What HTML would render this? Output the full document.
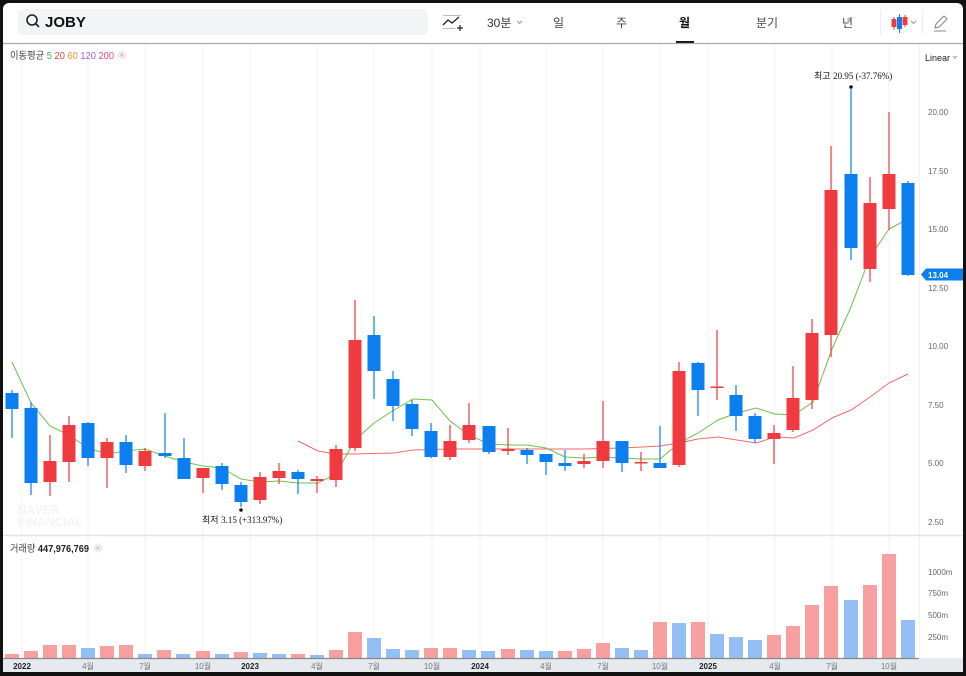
<!DOCTYPE html>
<html><head><meta charset="utf-8"><style>
*{margin:0;padding:0;box-sizing:border-box}
html,body{width:966px;height:676px;background:#111;overflow:hidden;font-family:"Liberation Sans","Noto Sans CJK KR",sans-serif}
#f{position:absolute;left:3px;top:3px;width:960px;height:669px;background:#fff;border-radius:6px;overflow:hidden}
</style></head><body>
<div id="f"></div>
<svg width="966" height="676" style="position:absolute;left:0;top:0" xmlns="http://www.w3.org/2000/svg" font-family="Liberation Sans, Noto Sans CJK KR, sans-serif">
<rect x="18" y="9" width="410" height="26" rx="5" fill="#f3f4f6"/>
<circle cx="32" cy="20" r="5" fill="none" stroke="#222" stroke-width="1.6"/>
<line x1="35.5" y1="23.5" x2="39" y2="27" stroke="#222" stroke-width="1.6"/>
<text x="45" y="27" font-size="15" font-weight="bold" fill="#111">JOBY</text>
<line x1="443" y1="15.5" x2="461" y2="15.5" stroke="#bbb"/>
<line x1="443" y1="28.5" x2="455" y2="28.5" stroke="#bbb"/>
<polyline points="443,25 448,20 452,23 459,17" fill="none" stroke="#222" stroke-width="1.3"/>
<path d="M457 28h6M460 25v6" stroke="#222" stroke-width="1.2"/>
<text x="487" y="27" font-size="12" fill="#333">30분</text>
<path d="M517 21l2.5 2.5 2.5-2.5" fill="none" stroke="#999"/>
<text x="553" y="27" font-size="12" fill="#444">일</text>
<text x="616" y="27" font-size="12" fill="#444">주</text>
<text x="679" y="27" font-size="12" font-weight="bold" fill="#111">월</text>
<rect x="676" y="41" width="18" height="3" fill="#111"/>
<text x="756" y="27" font-size="12" fill="#444">분기</text>
<text x="842" y="27" font-size="12" fill="#444">년</text>
<line x1="880.5" y1="10" x2="880.5" y2="35" stroke="#eee"/>
<line x1="894" y1="17" x2="894" y2="30" stroke="#ef3a3f" stroke-width="1"/><rect x="891.5" y="19" width="5" height="8" fill="#ef3a3f"/>
<line x1="899.5" y1="14" x2="899.5" y2="33" stroke="#0b7ef0"/><rect x="897" y="17" width="5" height="12" fill="#0b7ef0"/>
<line x1="905" y1="15" x2="905" y2="27" stroke="#ef3a3f"/><rect x="902.5" y="17" width="5" height="8" fill="#ef3a3f"/>
<path d="M911 21l2.5 2.5 2.5-2.5" fill="none" stroke="#999"/>
<line x1="922.5" y1="10" x2="922.5" y2="35" stroke="#eee"/>
<path d="M935 28l1-4 8-8 3 3-8 8zM934 31h12" fill="none" stroke="#888" stroke-width="1.1"/>
<line x1="3" y1="43.5" x2="963" y2="43.5" stroke="#aaa" stroke-width="1.2"/>
<g stroke="#f1f2f4">
<line x1="22" y1="44" x2="22" y2="658"/><line x1="88" y1="44" x2="88" y2="658"/><line x1="145" y1="44" x2="145" y2="658"/><line x1="203" y1="44" x2="203" y2="658"/><line x1="250" y1="44" x2="250" y2="658"/><line x1="317" y1="44" x2="317" y2="658"/><line x1="374" y1="44" x2="374" y2="658"/><line x1="432" y1="44" x2="432" y2="658"/><line x1="480" y1="44" x2="480" y2="658"/><line x1="546" y1="44" x2="546" y2="658"/><line x1="603" y1="44" x2="603" y2="658"/><line x1="660" y1="44" x2="660" y2="658"/><line x1="708" y1="44" x2="708" y2="658"/><line x1="775" y1="44" x2="775" y2="658"/><line x1="832" y1="44" x2="832" y2="658"/><line x1="889" y1="44" x2="889" y2="658"/>
<line x1="919.5" y1="44" x2="919.5" y2="658"/>
</g>
<line x1="3" y1="535.5" x2="963" y2="535.5" stroke="#e2e5ea" stroke-width="1.5"/>
<text x="10" y="59" font-size="10" fill="#444" textLength="104" lengthAdjust="spacingAndGlyphs">이동평균 <tspan fill="#4caf50">5</tspan> <tspan fill="#f04050">20</tspan> <tspan fill="#f5922f">60</tspan> <tspan fill="#a066d8">120</tspan> <tspan fill="#e8487c">200</tspan></text>
<circle cx="122" cy="55" r="4.5" fill="#eee"/><text x="119.8" y="57.5" font-size="7" fill="#aaa">×</text>
<text x="925" y="61" font-size="9" fill="#222">Linear</text><path d="M953 56l2 2 2-2" fill="none" stroke="#999"/>
<text x="18" y="514" font-size="12" font-weight="bold" fill="#f3f4f6">NAVER</text>
<text x="18" y="526" font-size="12" font-weight="bold" fill="#f3f4f6">FINANCIAL</text>
<g font-size="8" fill="#666">
<text x="928" y="115">20.00</text><text x="928" y="174">17.50</text><text x="928" y="232">15.00</text><text x="928" y="291">12.50</text><text x="928" y="349">10.00</text><text x="928" y="408">7.50</text><text x="928" y="466">5.00</text><text x="928" y="525">2.50</text>
<text x="928" y="575">1000m</text><text x="928" y="596">750m</text><text x="928" y="618">500m</text><text x="928" y="640">250m</text>
</g>
<path d="M921 274.5l5-6h37v12h-37z" fill="#0b7ef0"/><text x="928" y="278" font-size="8" font-weight="bold" fill="#fff">13.04</text>
<polyline fill="none" stroke="#f06a6a" stroke-width="1" points="298,441 318,451 336,454 355,454 394,453 413,450 450,449 489,449 527,449 584,449 622,448 660,446 679,443 698,439 718,437 737,440 756,443 775,437 794,438 813,430 832,418 851,410 870,397 889,383 908,374"/>
<polyline fill="none" stroke="#6cc24a" stroke-width="1" points="12,362 31,403 50,426 69,435 88,448 107,454 126,451 145,449 165,456 184,462 203,466 222,468 241,479 260,482 279,481 298,483 318,483 336,474 355,440 374,423 394,410 413,399 432,400 450,421 469,435 489,444 508,445 527,445 546,448 565,457 584,458 603,457 622,458 641,459 660,459 679,443 698,433 718,420 737,413 756,408 775,414 794,415 813,402 832,349 851,307 870,257 889,229 908,219"/>
<g stroke-width="1.2">
<g fill="#0b7ef0" stroke="#0b7ef0">
<line x1="12" y1="390" x2="12" y2="438"/><rect x="5.5" y="393" width="13" height="16" stroke="none"/>
<line x1="31" y1="402" x2="31" y2="495"/><rect x="24.5" y="408" width="13" height="75" stroke="none"/>
<line x1="88" y1="422" x2="88" y2="466"/><rect x="81.5" y="423" width="13" height="35" stroke="none"/>
<line x1="126" y1="435" x2="126" y2="473"/><rect x="119.5" y="442" width="13" height="23" stroke="none"/>
<line x1="165" y1="413" x2="165" y2="458"/><rect x="158.5" y="453" width="13" height="3" stroke="none"/>
<line x1="184" y1="438" x2="184" y2="479"/><rect x="177.5" y="458" width="13" height="21" stroke="none"/>
<line x1="222" y1="463" x2="222" y2="490"/><rect x="215.5" y="466" width="13" height="18" stroke="none"/>
<line x1="241" y1="482" x2="241" y2="507"/><rect x="234.5" y="485" width="13" height="17" stroke="none"/>
<line x1="298" y1="470" x2="298" y2="494"/><rect x="291.5" y="472" width="13" height="7" stroke="none"/>
<line x1="374" y1="316" x2="374" y2="399"/><rect x="367.5" y="335" width="13" height="36" stroke="none"/>
<line x1="393" y1="371" x2="393" y2="421"/><rect x="386.5" y="379" width="13" height="27" stroke="none"/>
<line x1="412" y1="400" x2="412" y2="436"/><rect x="405.5" y="404" width="13" height="25" stroke="none"/>
<line x1="431" y1="423" x2="431" y2="458"/><rect x="424.5" y="431" width="13" height="26" stroke="none"/>
<line x1="489" y1="426" x2="489" y2="454"/><rect x="482.5" y="426" width="13" height="26" stroke="none"/>
<line x1="527" y1="448" x2="527" y2="464"/><rect x="520.5" y="450" width="13" height="5" stroke="none"/>
<line x1="546" y1="454" x2="546" y2="475"/><rect x="539.5" y="454" width="13" height="8" stroke="none"/>
<line x1="565" y1="450" x2="565" y2="471"/><rect x="558.5" y="463" width="13" height="3" stroke="none"/>
<line x1="622" y1="441" x2="622" y2="472"/><rect x="615.5" y="441" width="13" height="22" stroke="none"/>
<line x1="660" y1="426" x2="660" y2="468"/><rect x="653.5" y="463" width="13" height="5" stroke="none"/>
<line x1="698" y1="362" x2="698" y2="416"/><rect x="691.5" y="363" width="13" height="27" stroke="none"/>
<line x1="736" y1="385" x2="736" y2="431"/><rect x="729.5" y="395" width="13" height="21" stroke="none"/>
<line x1="755" y1="413" x2="755" y2="443"/><rect x="748.5" y="416" width="13" height="23" stroke="none"/>
<line x1="851" y1="89" x2="851" y2="260"/><rect x="844.5" y="174" width="13" height="74" stroke="none"/>
<line x1="908" y1="181" x2="908" y2="276"/><rect x="901.5" y="183" width="13" height="92" stroke="none"/>
</g>
<g fill="#ef3a3f" stroke="#ef3a3f">
<line x1="50" y1="435" x2="50" y2="496"/><rect x="43.5" y="461" width="13" height="21" stroke="none"/>
<line x1="69" y1="416" x2="69" y2="482"/><rect x="62.5" y="425" width="13" height="37" stroke="none"/>
<line x1="107" y1="438" x2="107" y2="488"/><rect x="100.5" y="442" width="13" height="16" stroke="none"/>
<line x1="145" y1="448" x2="145" y2="471"/><rect x="138.5" y="451" width="13" height="15" stroke="none"/>
<line x1="203" y1="468" x2="203" y2="493"/><rect x="196.5" y="468" width="13" height="10" stroke="none"/>
<line x1="260" y1="472" x2="260" y2="504"/><rect x="253.5" y="477" width="13" height="23" stroke="none"/>
<line x1="279" y1="463" x2="279" y2="484"/><rect x="272.5" y="471" width="13" height="7" stroke="none"/>
<line x1="317" y1="476" x2="317" y2="493"/><rect x="310.5" y="479" width="13" height="2" stroke="none"/>
<line x1="336" y1="445" x2="336" y2="487"/><rect x="329.5" y="449" width="13" height="31" stroke="none"/>
<line x1="355" y1="300" x2="355" y2="451"/><rect x="348.5" y="340" width="13" height="108" stroke="none"/>
<line x1="450" y1="425" x2="450" y2="460"/><rect x="443.5" y="441" width="13" height="16" stroke="none"/>
<line x1="469" y1="403" x2="469" y2="443"/><rect x="462.5" y="425" width="13" height="15" stroke="none"/>
<line x1="508" y1="428" x2="508" y2="455"/><rect x="501.5" y="449" width="13" height="2" stroke="none"/>
<line x1="584" y1="454" x2="584" y2="468"/><rect x="577.5" y="461" width="13" height="3" stroke="none"/>
<line x1="603" y1="401" x2="603" y2="468"/><rect x="596.5" y="441" width="13" height="20" stroke="none"/>
<line x1="641" y1="452" x2="641" y2="471"/><rect x="634.5" y="462" width="13" height="1.5" stroke="none"/>
<line x1="679" y1="362" x2="679" y2="467"/><rect x="672.5" y="371" width="13" height="94" stroke="none"/>
<line x1="717" y1="330" x2="717" y2="400"/><rect x="710.5" y="386.5" width="13" height="1.5" stroke="none"/>
<line x1="774" y1="425" x2="774" y2="464"/><rect x="767.5" y="433" width="13" height="6" stroke="none"/>
<line x1="793" y1="366" x2="793" y2="432"/><rect x="786.5" y="398" width="13" height="32" stroke="none"/>
<line x1="812" y1="319" x2="812" y2="409"/><rect x="805.5" y="333" width="13" height="67" stroke="none"/>
<line x1="831" y1="146" x2="831" y2="357"/><rect x="824.5" y="190" width="13" height="145" stroke="none"/>
<line x1="870" y1="177" x2="870" y2="282"/><rect x="863.5" y="203" width="13" height="66" stroke="none"/>
<line x1="889" y1="112" x2="889" y2="230"/><rect x="882.5" y="174" width="13" height="35" stroke="none"/>
</g>
</g>
<circle cx="241" cy="510" r="1.8" fill="#111"/>
<text x="202" y="523" font-size="9" fill="#111">최저 <tspan font-family="Liberation Serif, serif">3.15 (+313.97%)</tspan></text>
<circle cx="851" cy="87" r="1.8" fill="#111"/>
<text x="814" y="79" font-size="9" fill="#111">최고 <tspan font-family="Liberation Serif, serif">20.95 (-37.76%)</tspan></text>
<text x="10" y="552" font-size="10" fill="#444" textLength="79" lengthAdjust="spacingAndGlyphs">거래량 <tspan fill="#222" font-weight="bold">447,976,769</tspan></text>
<circle cx="98" cy="548" r="4.5" fill="#eee"/><text x="95.8" y="550.5" font-size="7" fill="#aaa">×</text>
<g fill="#f7a09f">
<rect x="5" y="654" width="14" height="4"/><rect x="24" y="651" width="14" height="7"/><rect x="43" y="645" width="14" height="13"/><rect x="62" y="645" width="14" height="13"/><rect x="100" y="646" width="14" height="12"/><rect x="119" y="645" width="14" height="13"/><rect x="157" y="650" width="14" height="8"/><rect x="196" y="651" width="14" height="7"/><rect x="234" y="652" width="14" height="6"/><rect x="291" y="654" width="14" height="4"/><rect x="329" y="650" width="14" height="8"/><rect x="348" y="632" width="14" height="26"/><rect x="424" y="648" width="14" height="10"/><rect x="443" y="648" width="14" height="10"/><rect x="501" y="649" width="14" height="9"/><rect x="558" y="651" width="14" height="7"/><rect x="577" y="649" width="14" height="9"/><rect x="596" y="643" width="14" height="15"/><rect x="653" y="622" width="14" height="36"/><rect x="691" y="622" width="14" height="36"/><rect x="767" y="635" width="14" height="23"/><rect x="786" y="626" width="14" height="32"/><rect x="805" y="605" width="14" height="53"/><rect x="824" y="586" width="14" height="72"/><rect x="863" y="585" width="14" height="73"/><rect x="882" y="554" width="14" height="104"/>
</g>
<g fill="#93bff5">
<rect x="81" y="648" width="14" height="10"/><rect x="138" y="654" width="14" height="4"/><rect x="176" y="654" width="14" height="4"/><rect x="215" y="654" width="14" height="4"/><rect x="253" y="653" width="14" height="5"/><rect x="272" y="654" width="14" height="4"/><rect x="310" y="655" width="14" height="3"/><rect x="367" y="638" width="14" height="20"/><rect x="386" y="649" width="14" height="9"/><rect x="405" y="650" width="14" height="8"/><rect x="462" y="650" width="14" height="8"/><rect x="481" y="651" width="14" height="7"/><rect x="520" y="650" width="14" height="8"/><rect x="539" y="651" width="14" height="7"/><rect x="615" y="648" width="14" height="10"/><rect x="634" y="650" width="14" height="8"/><rect x="672" y="623" width="14" height="35"/><rect x="710" y="634" width="14" height="24"/><rect x="729" y="637" width="14" height="21"/><rect x="748" y="640" width="14" height="18"/><rect x="844" y="600" width="14" height="58"/><rect x="901" y="620" width="14" height="38"/>
</g>
<rect x="3" y="658" width="960" height="14" fill="#e6e9ee"/>
<line x1="3" y1="658.5" x2="919" y2="658.5" stroke="#888" stroke-width="1.2"/>
<g font-size="8" fill="#777" text-anchor="middle">
<text x="22" y="669" font-weight="bold" fill="#222">2022</text><text x="88" y="669">4월</text><text x="145" y="669">7월</text><text x="203" y="669">10월</text><text x="250" y="669" font-weight="bold" fill="#222">2023</text><text x="317" y="669">4월</text><text x="374" y="669">7월</text><text x="432" y="669">10월</text><text x="480" y="669" font-weight="bold" fill="#222">2024</text><text x="546" y="669">4월</text><text x="603" y="669">7월</text><text x="660" y="669">10월</text><text x="708" y="669" font-weight="bold" fill="#222">2025</text><text x="775" y="669">4월</text><text x="832" y="669">7월</text><text x="889" y="669">10월</text>
</g>
</svg>
</body></html>
